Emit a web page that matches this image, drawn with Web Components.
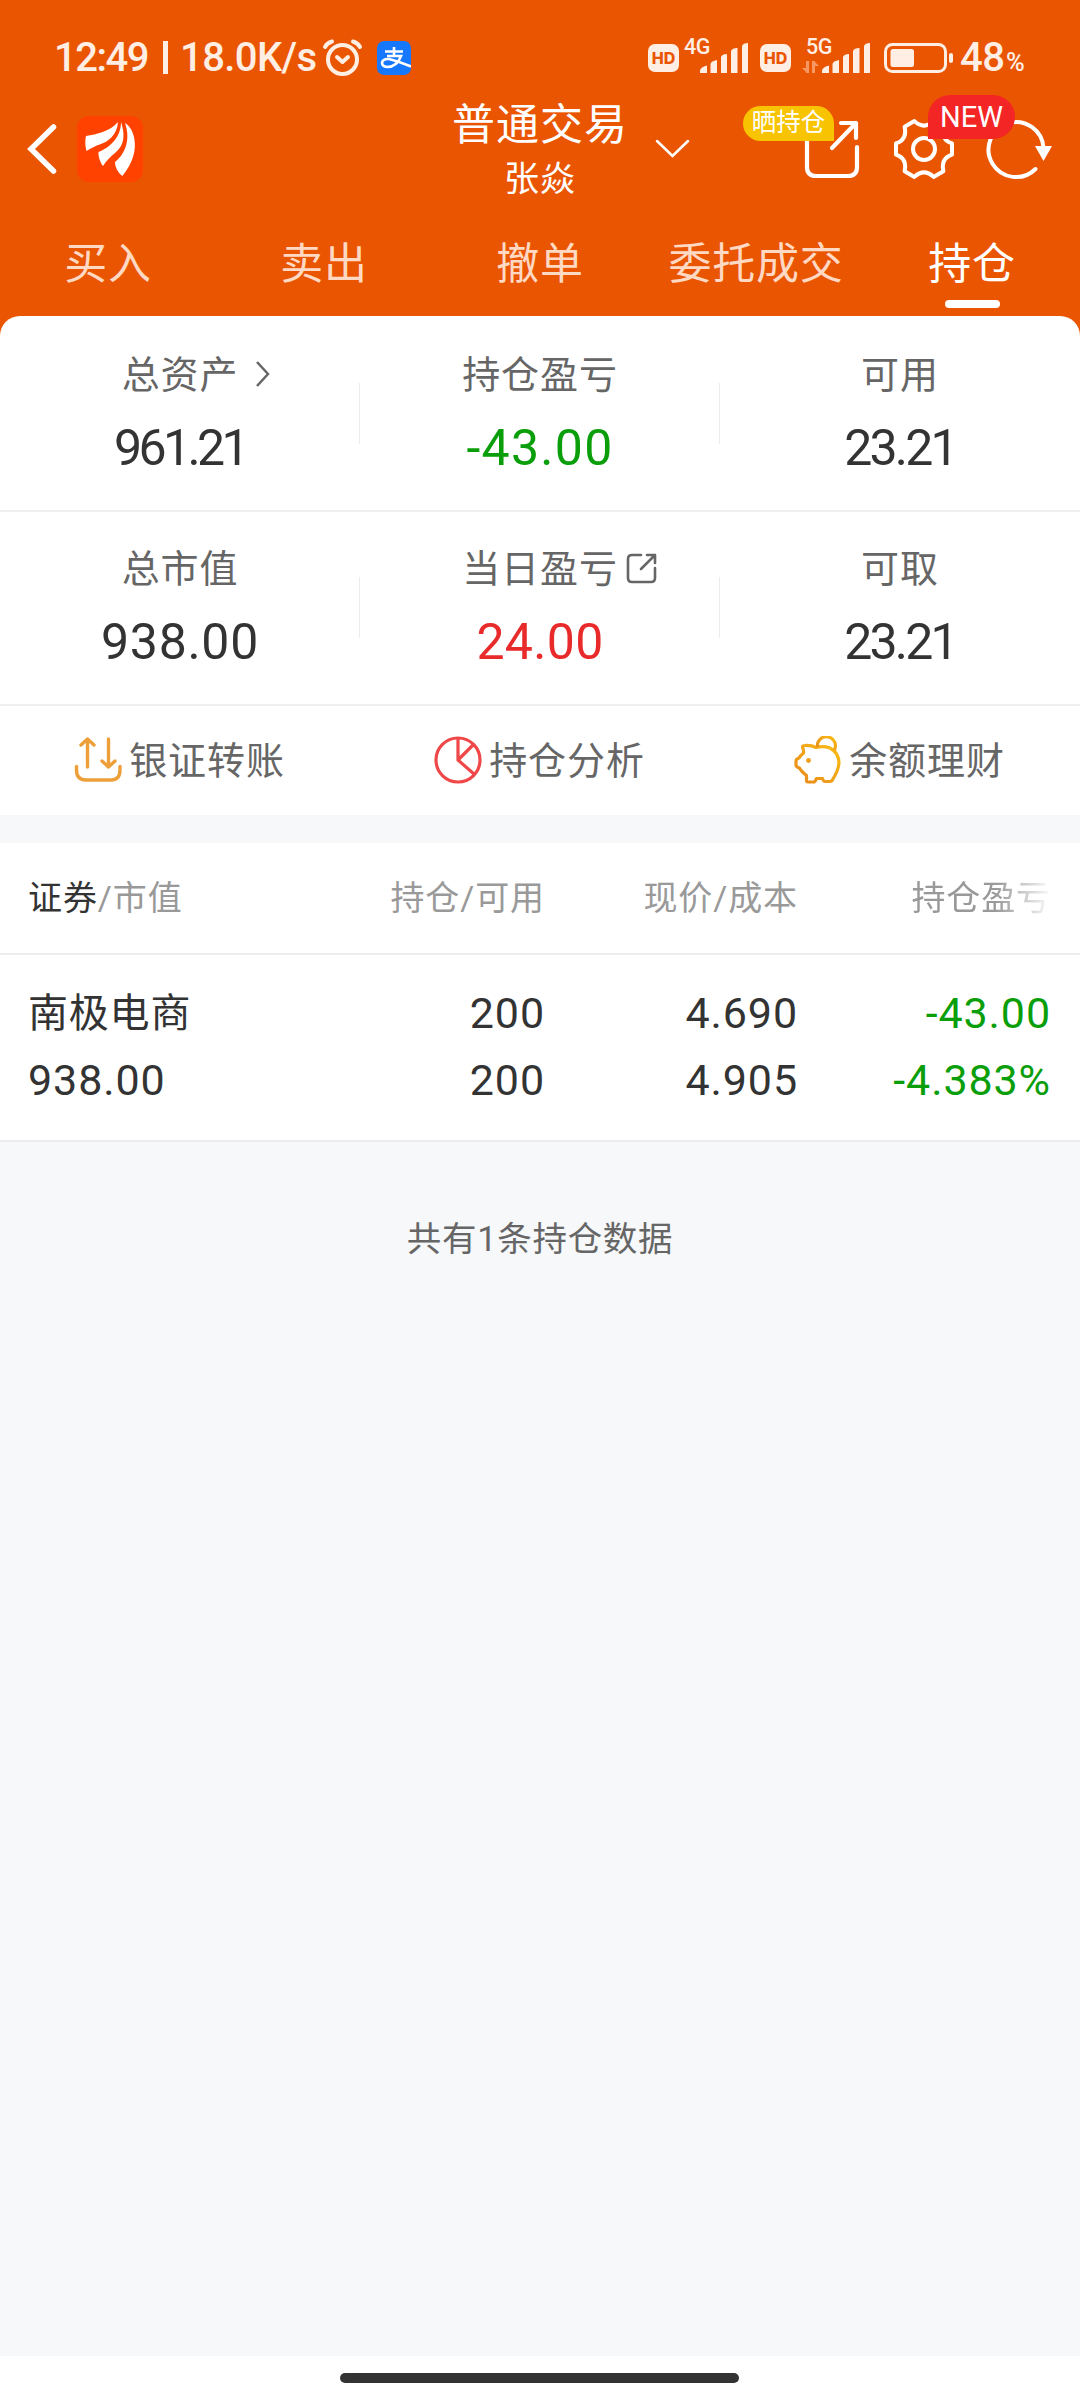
<!DOCTYPE html>
<html lang="zh-CN">
  <head>
    <meta charset="UTF-8" />
    <title>持仓</title>
    <style>
      body {
        margin: 0;
        width: 1080px;
        height: 2400px;
        overflow: hidden;
        background: #f7f8fa;
        color: #333;
        font-family: Roboto, "Noto Sans CJK SC", sans-serif;
      }
    </style>
    <script>
      // Registers an element whose shadow root is cloned from a template
      function define(name, html) {
        const template = document.createElement("template");
        template.innerHTML = html;
        customElements.define(
          name,
          class extends HTMLElement {
            constructor() {
              super();
              this.attachShadow({ mode: "open" }).appendChild(
                template.content.cloneNode(true)
              );
            }
          }
        );
      }

      define(
        "phone-screen",
        `
        <style>
          :host {
            display: flex;
            flex-direction: column;
            height: 2400px;
          }
          header {
            background: #ea5502;
            height: 336px;
            flex: none;
          }
          main {
            flex: 1;
            margin-top: -20px;
          }
        </style>
        <header><slot name="header"></slot></header>
        <main><slot></slot></main>
        <slot name="footer"></slot>
      `
      );

      define(
        "signal-bars",
        `
        <style>
          :host { display: block; height: 30px; }
          svg { display: block; }
        </style>
        <svg width="48" height="30" fill="#ffeee3">
          <path d="M0 30V28Q0 24 7 22.500V30ZM10.500 30V21Q11 18 17 17V30ZM21 30V14Q22 11 27 11V30ZM31 30V8Q32 5 37.500 5V30ZM42 30V3Q43 0 48 0V30Z"/>
        </svg>
      `
      );

      define(
        "status-bar",
        `
        <style>
          :host {
            display: flex;
            align-items: center;
            height: 86px;
            padding: 29px 54px 0 54px;
            box-sizing: border-box;
            color: #ffeee3;
            font-size: 40px;
            font-weight: 500;
            line-height: 58px;
          }
          .time { width: 109px; letter-spacing: -1.5px; }
          .sep { width: 5px; height: 33px; background: #ffeee3; }
          .speed { margin-left: 12px; width: 138px; letter-spacing: -0.6px; }
          .alarm { margin-left: 4px; }
          .pay { margin-left: 14px; margin-right: auto; }
          .hd {
            width: 31px;
            height: 28px;
            border-radius: 7px;
            background: #ffeee3;
            color: #ea5502;
            font: 800 16px/29px Inter, sans-serif;
            text-align: center;
          }
          .net { position: relative; margin-left: 21px; }
          .net + .hd { margin-left: 12px; }
          .net.five { margin-left: 31px; }
          .net b {
            position: absolute;
            left: -16px;
            top: -7px;
            font-size: 21.500px;
            line-height: 22px;
            letter-spacing: -0.5px;
            font-weight: 500;
          }
          .updown { position: absolute; left: -20px; top: 18px; }
          .battery { margin-left: 14px; }
          .level { margin-left: 7px; width: 46px; letter-spacing: -0.5px; }
          .pct {
            width: 20px;
            font-size: 25.500px;
            line-height: 26px;
            padding-top: 9px;
          }
          svg { display: block; flex: none; }
        </style>
        <span class="time">12:49</span>
        <i class="sep"></i>
        <span class="speed">18.0K/s</span>
        <svg class="alarm" width="41" height="38" viewBox="0 0 41 38" fill="none" stroke="#ffeee3" stroke-width="4" stroke-linecap="round" stroke-linejoin="round">
          <circle cx="20.500" cy="20.500" r="14.500"/>
          <path d="M15 18l5.500 5 5.500-5M3 8Q5 4 10 2.500M38 8Q36 4 31 2.500"/>
        </svg>
        <svg class="pay" width="34" height="34" viewBox="0 0 34 34">
          <rect width="34" height="34" rx="7" fill="#1677ff"/>
          <path d="M8 10.500H26M17 6V15M10 15H24Q20 26 10 26Q5 25.500 5 21.500Q6 17.500 12 18Q20 20 34 25.500" fill="none" stroke="#fff" stroke-width="2.600"/>
        </svg>
        <span class="hd">HD</span>
        <span class="net"><b>4G</b><signal-bars></signal-bars></span>
        <span class="hd">HD</span>
        <span class="net five">
          <b>5G</b>
          <svg class="updown" width="17" height="12" fill="#f79762"><path d="M4 12V0h3v12zM5 12L0 7h5zM10 12V0h3v12zM12 0l5 5h-5z"/></svg>
          <signal-bars></signal-bars>
        </span>
        <svg class="battery" width="69" height="30" viewBox="0 0 69 30">
          <rect x="1.500" y="1.500" width="60" height="27" rx="7" fill="none" stroke="#ffeee3" stroke-width="3"/>
          <rect x="6.500" y="6" width="23.500" height="18" rx="2.500" fill="#ffeee3"/>
          <rect x="65" y="10" width="4" height="10" rx="2" fill="#ffeee3"/>
        </svg>
        <span class="level">48</span><span class="pct">%</span>
      `
      );

      define(
        "nav-bar",
        `
        <style>
          :host {
            display: grid;
            grid-template-columns: 1fr 176px 1fr;
            height: 124px;
            color: #fff;
          }
          .left { display: flex; align-items: center; padding: 1px 0 0 27px; }
          .logo { margin-left: 20px; }
          .title { text-align: center; letter-spacing: 1px; padding-top: 10px; }
          .title div { font-size: 43px; line-height: 58px; }
          .title p { margin: 1px 0 0; font-size: 35px; line-height: 50px; }
          .right { display: flex; align-items: center; padding: 1px 26px 0 28px; }
          .down { margin-right: auto; }
          .tool { position: relative; height: 62px; }
          .gear { margin-left: 35px; }
          .refresh { margin-left: 30px; }
          .badge {
            position: absolute;
            text-align: center;
            white-space: nowrap;
          }
          .show {
            left: -60px;
            top: -12px;
            width: 91px;
            height: 35px;
            border-radius: 18px 18px 0 18px;
            background: #f8c300;
            font-size: 24.500px;
            line-height: 34px;
          }
          .new {
            left: 34px;
            top: -23px;
            z-index: 1;
            width: 87px;
            height: 44px;
            border-radius: 22px 22px 22px 0;
            background: #f42525;
            font-size: 29px;
            line-height: 45px;
          }
          svg { display: block; flex: none; overflow: visible; }
        </style>
        <div class="left">
          <svg width="30" height="50" viewBox="0 0 30 50" fill="none" stroke="#fff" stroke-width="5.500" stroke-linecap="round"><path d="M26.500 3L4 25 26.500 47"/></svg>
          <svg class="logo" width="66" height="66" viewBox="0 0 66 66">
            <rect width="66" height="66" rx="12" fill="#ff4200"/>
            <path fill="#fff" d="M9 20C20 18 32 16 41 6C40 20 30 26 24 28C18 30 14 32 9.500 35C8 30 8 24 9 20ZM44 6C50 24 44 32 38 37C33 41 29 45 26 50C23 46 21 40 21.500 36C32 32 44 22 44 6ZM48 7C58 13 60 30 56 41C53 50 49 55 45.500 60C41 57 38 51 38 46C48 38 54 24 48 7Z"/>
          </svg>
        </div>
        <div class="title">
          <div>普通交易</div>
          <p>张焱</p>
        </div>
        <div class="right">
          <svg class="down" width="33" height="18" viewBox="0 0 33 18" fill="none" stroke="#fff" stroke-width="2.500" stroke-linecap="round"><path d="M1 1L16.500 16 32 1"/></svg>
          <div class="tool">
            <svg width="56" height="62" viewBox="0 0 56 62" fill="none" stroke="#fff" stroke-width="4.200" stroke-linecap="round" stroke-linejoin="round">
              <path d="M4 18V49Q4 58 13 58H45Q54 58 54 49V29M38 5H53V20M53 5L29 30"/>
            </svg>
            <span class="badge show">晒持仓</span>
          </div>
          <div class="tool gear">
            <svg width="60" height="62" viewBox="-30 -31 60 62" fill="none" stroke="#fff" stroke-width="4" stroke-linejoin="round">
              <path d="M28-5.600V5.600Q16.500 9.500 19.400 22.300L9.600 27.900Q0 19-9.600 27.900L-19.400 22.300Q-16.500 9.500-28 5.600V-5.600Q-16.500-9.500-19.400-22.300L-9.600-27.900Q0-19 9.600-27.900L19.400-22.300Q16.500-9.500 28-5.600Z"/>
              <circle r="11"/>
            </svg>
            <span class="badge new">NEW</span>
          </div>
          <div class="tool refresh">
            <svg width="70" height="62" viewBox="-32 -31 70 62">
              <path d="M19.500 20A27.500 27.500 0 1 1 27.500-1" fill="none" stroke="#fff" stroke-width="4" stroke-linecap="round"/>
              <path d="M19-3H36L27.500 12Z" fill="#fff"/>
            </svg>
          </div>
        </div>
      `
      );

      define(
        "tab-bar",
        `
        <style>
          :host { display: flex; height: 106px; }
          ::slotted(*) { flex: 1; }
        </style>
        <slot></slot>
      `
      );

      define(
        "tab-item",
        `
        <style>
          :host {
            display: flex;
            flex-direction: column;
            align-items: center;
            color: #ffd9c3;
            font-size: 43px;
            line-height: 60px;
            letter-spacing: 0.8px;
            padding-top: 24px;
          }
          :host([active]) { color: #fff; }
          i {
            display: none;
            width: 55px;
            height: 8px;
            margin-top: 6px;
            border-radius: 4px;
            background: #fff;
          }
          :host([active]) i { display: block; }
        </style>
        <span><slot></slot></span>
        <i></i>
      `
      );

      define(
        "asset-panel",
        `
        <style>
          :host {
            display: block;
            background: #fff;
            border-radius: 20px 20px 0 0;
            height: 499px;
            padding-top: 2px;
            box-sizing: border-box;
          }
        </style>
        <slot></slot>
      `
      );

      define(
        "stat-row",
        `
        <style>
          :host {
            display: grid;
            grid-template-columns: repeat(3, 1fr);
            height: 194px;
            box-sizing: border-box;
            border-bottom: 2px solid #efeff0;
          }
          ::slotted(:not(:last-child)) {
            background: linear-gradient(#ececee, #ececee) no-repeat right 65px / 1.500px 61px;
          }
        </style>
        <slot></slot>
      `
      );

      define(
        "stat-cell",
        `
        <style>
          :host { display: block; text-align: center; padding-top: 31px; }
          .label {
            position: relative;
            display: inline-block;
            color: #666;
            font-size: 38px;
            line-height: 52px;
            letter-spacing: 0.9px;
          }
          .value {
            font-size: 50px;
            line-height: 60px;
            letter-spacing: var(--tracking, 0.7px);
            margin-top: 17px;
          }
          :host([down]) .value { color: #0a9e0a; }
          :host([up]) .value { color: #e82a2a; }
          ::slotted(svg) {
            position: absolute;
            left: calc(100% + 8px);
            top: 10px;
          }
        </style>
        <div class="label"><slot name="label"></slot><slot name="icon"></slot></div>
        <div class="value"><slot></slot></div>
      `
      );

      define(
        "action-row",
        `
        <style>
          :host {
            display: grid;
            grid-template-columns: repeat(3, 1fr);
            height: 109px;
          }
        </style>
        <slot></slot>
      `
      );

      define(
        "action-item",
        `
        <style>
          :host {
            display: flex;
            justify-content: center;
            align-items: center;
            gap: 7px;
            color: #666;
            font-size: 38px;
            line-height: 52px;
            letter-spacing: 0.9px;
          }
          ::slotted(svg) { margin-left: -1px; margin-top: -2px; }
        </style>
        <slot name="icon"></slot><span><slot></slot></span>
      `
      );

      define(
        "holding-table",
        `
        <style>
          :host { display: block; margin-top: 28px; background: #fff; }
        </style>
        <slot></slot>
      `
      );

      define(
        "holding-row",
        `
        <style>
          :host {
            display: grid;
            grid-template-columns: 1fr 254px 253px 253px;
            padding: 25px 29px 25px 28px;
            box-sizing: border-box;
            height: 187px;
            border-bottom: 2px solid #ececee;
            text-align: right;
            font-size: 43px;
            line-height: 67px;
            letter-spacing: 0.900px;
          }
          :host([head]) {
            height: 112px;
            padding-top: 30px;
            padding-bottom: 0;
            color: #999;
            font-size: 34px;
            line-height: 50px;
            letter-spacing: 0.9px;
          }
          ::slotted(:first-child) { text-align: left; }
        </style>
        <slot></slot>
      `
      );

      define(
        "holding-cell",
        `
        <style>
          :host { display: block; white-space: nowrap; }
          :host([down]) { color: #0a9e0a; }
          :host([fade]) {
            -webkit-mask-image: linear-gradient(to right, #000 78%, transparent 101%);
            mask-image: linear-gradient(to right, #000 78%, transparent 101%);
          }
        </style>
        <slot></slot>
      `
      );

      define(
        "list-note",
        `
        <style>
          :host {
            display: block;
            padding-top: 72px;
            text-align: center;
            color: #666;
            font-size: 34.500px;
            line-height: 50px;
            letter-spacing: 0.7px;
          }
        </style>
        <slot></slot>
      `
      );

      define(
        "home-bar",
        `
        <style>
          :host {
            display: flex;
            justify-content: center;
            height: 44px;
            padding: 17px 1px 0 0;
            box-sizing: border-box;
            background: #fff;
          }
          i { width: 399px; height: 10px; border-radius: 5px; background: #333; }
        </style>
        <i></i>
      `
      );
    </script>
    <style>
      .name { font-size: 40px; letter-spacing: 0.8px; }
      .dark { color: #333; }
      holding-cell div { height: 67px; }
    </style>
  </head>
  <body>
    <phone-screen>
      <status-bar slot="header"></status-bar>
      <nav-bar slot="header"></nav-bar>
      <tab-bar slot="header">
        <tab-item>买入</tab-item>
        <tab-item>卖出</tab-item>
        <tab-item>撤单</tab-item>
        <tab-item>委托成交</tab-item>
        <tab-item active>持仓</tab-item>
      </tab-bar>

      <asset-panel>
        <stat-row>
          <stat-cell style="--tracking: -3.6px">
            <span slot="label">总资产</span>
            <svg slot="icon" style="margin-left: 10px; margin-top: 2px" width="14" height="26" viewBox="0 0 14 26" fill="none" stroke="#666" stroke-width="2.500"><path d="M1 1L12 13 1 25"/></svg>
            961.21
          </stat-cell>
          <stat-cell down style="--tracking: 1.3px"><span slot="label">持仓盈亏</span>-43.00</stat-cell>
          <stat-cell style="--tracking: -2.8px"><span slot="label">可用</span>23.21</stat-cell>
        </stat-row>
        <stat-row>
          <stat-cell><span slot="label">总市值</span>938.00</stat-cell>
          <stat-cell up style="--tracking: 0.3px">
            <span slot="label">当日盈亏</span>
            <svg slot="icon" width="31" height="31" viewBox="0 0 31 31" fill="none" stroke="#666" stroke-width="2.600" stroke-linecap="round" stroke-linejoin="round"><path d="M15 2H6Q2 2 2 6V25Q2 29 6 29H25Q29 29 29 25V15M21 2H29V10M29 2L15 16"/></svg>
            24.00
          </stat-cell>
          <stat-cell style="--tracking: -2.8px"><span slot="label">可取</span>23.21</stat-cell>
        </stat-row>
        <action-row>
          <action-item>
            <svg slot="icon" width="48" height="48" viewBox="0 0 48 48" fill="none" stroke="#eda03a" stroke-width="3.400" stroke-linecap="round" stroke-linejoin="round"><path d="M2.500 30.500V34Q2.500 44 12 44H37Q46 44 46 34V30.500M13.500 31V3M7 9L13.500 3 20 9M34.500 3V31M28 25L34.500 31 41 25"/></svg>
            银证转账
          </action-item>
          <action-item>
            <svg slot="icon" width="48" height="48" viewBox="0 0 48 48" fill="none" stroke="#f04848" stroke-width="3.200"><circle cx="24" cy="24" r="22"/><path d="M24 2V24L40 38M24 24L39 9"/></svg>
            持仓分析
          </action-item>
          <action-item>
            <svg slot="icon" width="48" height="48" viewBox="0 0 48 48" fill="none" stroke="url(#gold)" stroke-width="3.200" stroke-linejoin="round">
              <defs><linearGradient id="gold" x1="1" y1="0" x2="0" y2="1"><stop offset="0" stop-color="#f9bd14"/><stop offset="1" stop-color="#e8891c"/></linearGradient></defs>
              <path d="M8.500 11Q8.500 9.500 11 9.500Q17 9 22 11.500Q29 9.500 36 12Q45 17 45 27Q44.500 34 39 43Q38 45.500 36 45.500H31Q29.500 45.500 28.500 42.500H22.500Q21 46 20 46H14Q12.500 46 12.500 44V39.500Q7 35 5.500 32Q2 31 2 29V25Q2 23 5 22Q6 20 9.500 17Q10 15 8.500 11Z"/>
              <path d="M23.500 11A9 9 0 1 1 40 14.500"/>
              <circle cx="14.500" cy="24.500" r="2.400" fill="#f0a01c" stroke="none"/>
            </svg>
            余额理财
          </action-item>
        </action-row>
      </asset-panel>

      <holding-table>
        <holding-row head>
          <holding-cell><span class="dark">证券</span>/市值</holding-cell>
          <holding-cell>持仓/可用</holding-cell>
          <holding-cell>现价/成本</holding-cell>
          <holding-cell fade>持仓盈亏</holding-cell>
        </holding-row>
        <holding-row>
          <holding-cell><div class="name">南极电商</div><div>938.00</div></holding-cell>
          <holding-cell><div>200</div><div>200</div></holding-cell>
          <holding-cell><div>4.690</div><div>4.905</div></holding-cell>
          <holding-cell down><div>-43.00</div><div>-4.383%</div></holding-cell>
        </holding-row>
      </holding-table>
      <list-note>共有1条持仓数据</list-note>

      <home-bar slot="footer"></home-bar>
    </phone-screen>
  </body>
</html>
